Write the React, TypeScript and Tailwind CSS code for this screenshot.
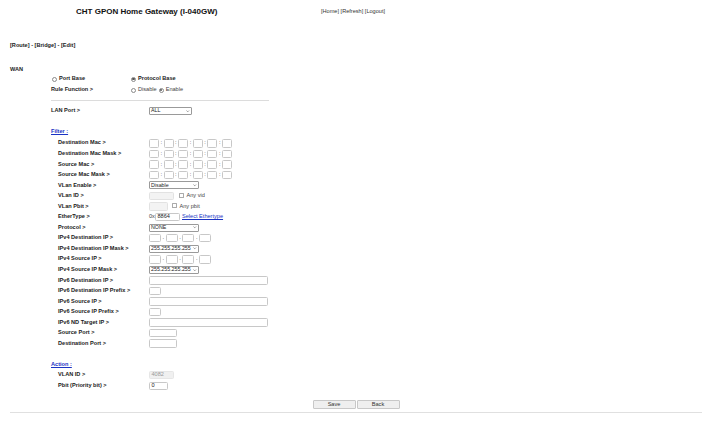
import React from "react";

const Radio = ({ checked }: { checked?: boolean }) => (
  <span className="inline-flex w-[5px] h-[5px] rounded-full border-[0.7px] border-[#8a8a8a] items-center justify-center mr-[2px]">
    {checked && <span className="w-[2.4px] h-[2.4px] rounded-full bg-[#555]" />}
  </span>
);

const Check = () => (
  <span className="inline-block w-[5px] h-[5px] border-[0.7px] border-[#aaa] rounded-[0.5px] mr-[2.5px]" />
);

const Select = ({ value, className }: { value: string; className: string }) => (
  <div
    className={`h-[8px] border-[0.7px] border-[#9a9a9a] rounded-[1px] flex items-center justify-between pl-[1px] pr-[1.5px] text-[5.3px] ${className}`}
  >
    <span className="leading-none whitespace-nowrap">{value}</span>
    <svg viewBox="0 0 6 4" className="w-[3.5px] h-[2.5px] shrink-0">
      <path d="M0.8 0.8 L3 3 L5.2 0.8" fill="none" stroke="#333" strokeWidth="0.8" />
    </svg>
  </div>
);

const Box = ({ className, value }: { className: string; value?: string }) => (
  <span
    className={`inline-flex items-center h-[8.5px] border-[0.7px] border-[#c8c8c8] rounded-[1.5px] pl-[1.5px] leading-none ${className}`}
  >
    {value}
  </span>
);

const MacRow = () => (
  <div className="flex items-center">
    {[0, 1, 2, 3, 4, 5].map((i) => (
      <React.Fragment key={i}>
        {i > 0 && <span className="w-[4.6px] text-center leading-none">:</span>}
        <Box className="w-[10px]" />
      </React.Fragment>
    ))}
  </div>
);

const IpRow = () => (
  <div className="flex items-center">
    {[0, 1, 2, 3].map((i) => (
      <React.Fragment key={i}>
        {i > 0 && <span className="w-[4.7px] text-center leading-none">.</span>}
        <Box className="w-[12px]" />
      </React.Fragment>
    ))}
  </div>
);

const Row = ({ label, children }: { label: string; children?: React.ReactNode }) => (
  <div className="h-[10.55px] flex items-center">
    <div className="w-[98px] pl-[7px] font-bold leading-none text-[#1a1a1a]">{label}</div>
    <div className="flex items-center">{children}</div>
  </div>
);

export default function App() {
  return (
    <div className="min-h-screen bg-white text-[#222] text-[5.6px] font-['Liberation_Sans',Arial,sans-serif] pl-[10px] pr-[18px]">
      {/* Header */}
      <div className="h-[24px] flex items-center">
        <div className="ml-[66px] w-[245px] text-[8px] font-bold text-[#111] leading-none">
          CHT GPON Home Gateway (I-040GW)
        </div>
        <div className="text-[#333] leading-none">[Home] [Refresh] [Logout]</div>
      </div>

      <div className="mt-[17px] h-[10px] flex items-center font-bold leading-none">
        [Route] - [Bridge] - [Edit]
      </div>

      <div className="mt-[14px] h-[9px] flex items-center font-bold leading-none">WAN</div>

      <div className="pl-[41px]">
        <div className="h-[10px] flex items-center">
          <div className="w-[80px] flex items-center pl-[1px] font-bold leading-none">
            <Radio /> Port Base
          </div>
          <div className="flex items-center font-bold leading-none">
            <Radio checked /> Protocol Base
          </div>
        </div>
        <div className="mt-[1px] h-[10px] flex items-center">
          <div className="w-[80px] font-bold leading-none">Rule Function &gt;</div>
          <div className="flex items-center leading-none text-[#444]">
            <Radio /> <span className="mr-[2px]">Disable</span>
            <Radio checked /> Enable
          </div>
        </div>

        <div className="mt-[5px] w-[218px] border-t border-[#dcdcdc]" />

        <div className="mt-[5px] h-[10px] flex items-center">
          <div className="w-[98px] font-bold leading-none">LAN Port &gt;</div>
          <Select value="ALL" className="w-[43px]" />
        </div>

        <div className="mt-[11px] h-[10px] flex items-center">
          <span className="text-[#1a33c4] underline font-bold leading-none">Filter :</span>
        </div>

        <div className="mt-[1px]">
          <Row label="Destination Mac >">
            <MacRow />
          </Row>
          <Row label="Destination Mac Mask >">
            <MacRow />
          </Row>
          <Row label="Source Mac >">
            <MacRow />
          </Row>
          <Row label="Source Mac Mask >">
            <MacRow />
          </Row>
          <Row label="VLan Enable >">
            <Select value="Disable" className="w-[50px]" />
          </Row>
          <Row label="VLan ID >">
            <Box className="w-[25px] bg-[#f3f3f3] border-[#e2e2e2]" />
            <span className="ml-[5px]">
              <Check />
            </span>
            <span className="leading-none text-[#444]">Any vid</span>
          </Row>
          <Row label="VLan Pbit >">
            <Box className="w-[19px] bg-[#f3f3f3] border-[#e2e2e2]" />
            <span className="ml-[4px]">
              <Check />
            </span>
            <span className="leading-none text-[#444]">Any pbit</span>
          </Row>
          <Row label="EtherType >">
            <span className="w-[6px] leading-none text-[#444]">0x</span>
            <Box className="w-[25px]" value="8864" />
            <span className="ml-[2px] text-[#1a33c4] underline leading-none">Select Ethertype</span>
          </Row>
          <Row label="Protocol >">
            <Select value="NONE" className="w-[50px]" />
          </Row>
          <Row label="IPv4 Destination IP >">
            <IpRow />
          </Row>
          <Row label="IPv4 Destination IP Mask >">
            <Select value="255.255.255.255" className="w-[50px]" />
          </Row>
          <Row label="IPv4 Source IP >">
            <IpRow />
          </Row>
          <Row label="IPv4 Source IP Mask >">
            <Select value="255.255.255.255" className="w-[50px]" />
          </Row>
          <Row label="IPv6 Destination IP >">
            <Box className="w-[119px]" />
          </Row>
          <Row label="IPv6 Destination IP Prefix >">
            <Box className="w-[12px]" />
          </Row>
          <Row label="IPv6 Source IP >">
            <Box className="w-[119px]" />
          </Row>
          <Row label="IPv6 Source IP Prefix >">
            <Box className="w-[12px]" />
          </Row>
          <Row label="IPv6 ND Target IP >">
            <Box className="w-[119px]" />
          </Row>
          <Row label="Source Port >">
            <Box className="w-[28px]" />
          </Row>
          <Row label="Destination Port >">
            <Box className="w-[28px]" />
          </Row>
        </div>

        <div className="mt-[11px] h-[10px] flex items-center">
          <span className="text-[#1a33c4] underline font-bold leading-none">Action :</span>
        </div>
        <Row label="VLAN ID >">
          <Box className="w-[25px] bg-[#f0f0f0] border-[#e6e6e6] text-[#999]" value="4082" />
        </Row>
        <Row label="Pbit (Priority bit) >">
          <Box className="w-[19px]" value="0" />
        </Row>
      </div>

      {/* Buttons */}
      <div className="mt-[9px] flex justify-center gap-[1px]">
        <button className="w-[43px] h-[9px] bg-[#efefef] border-[0.7px] border-[#c8c8c8] rounded-[1px] text-[#333] leading-none">
          Save
        </button>
        <button className="w-[43px] h-[9px] bg-[#efefef] border-[0.7px] border-[#c8c8c8] rounded-[1px] text-[#333] leading-none">
          Back
        </button>
      </div>
      <div className="mt-[3px] border-t border-[#e0e0e0]" />
    </div>
  );
}
